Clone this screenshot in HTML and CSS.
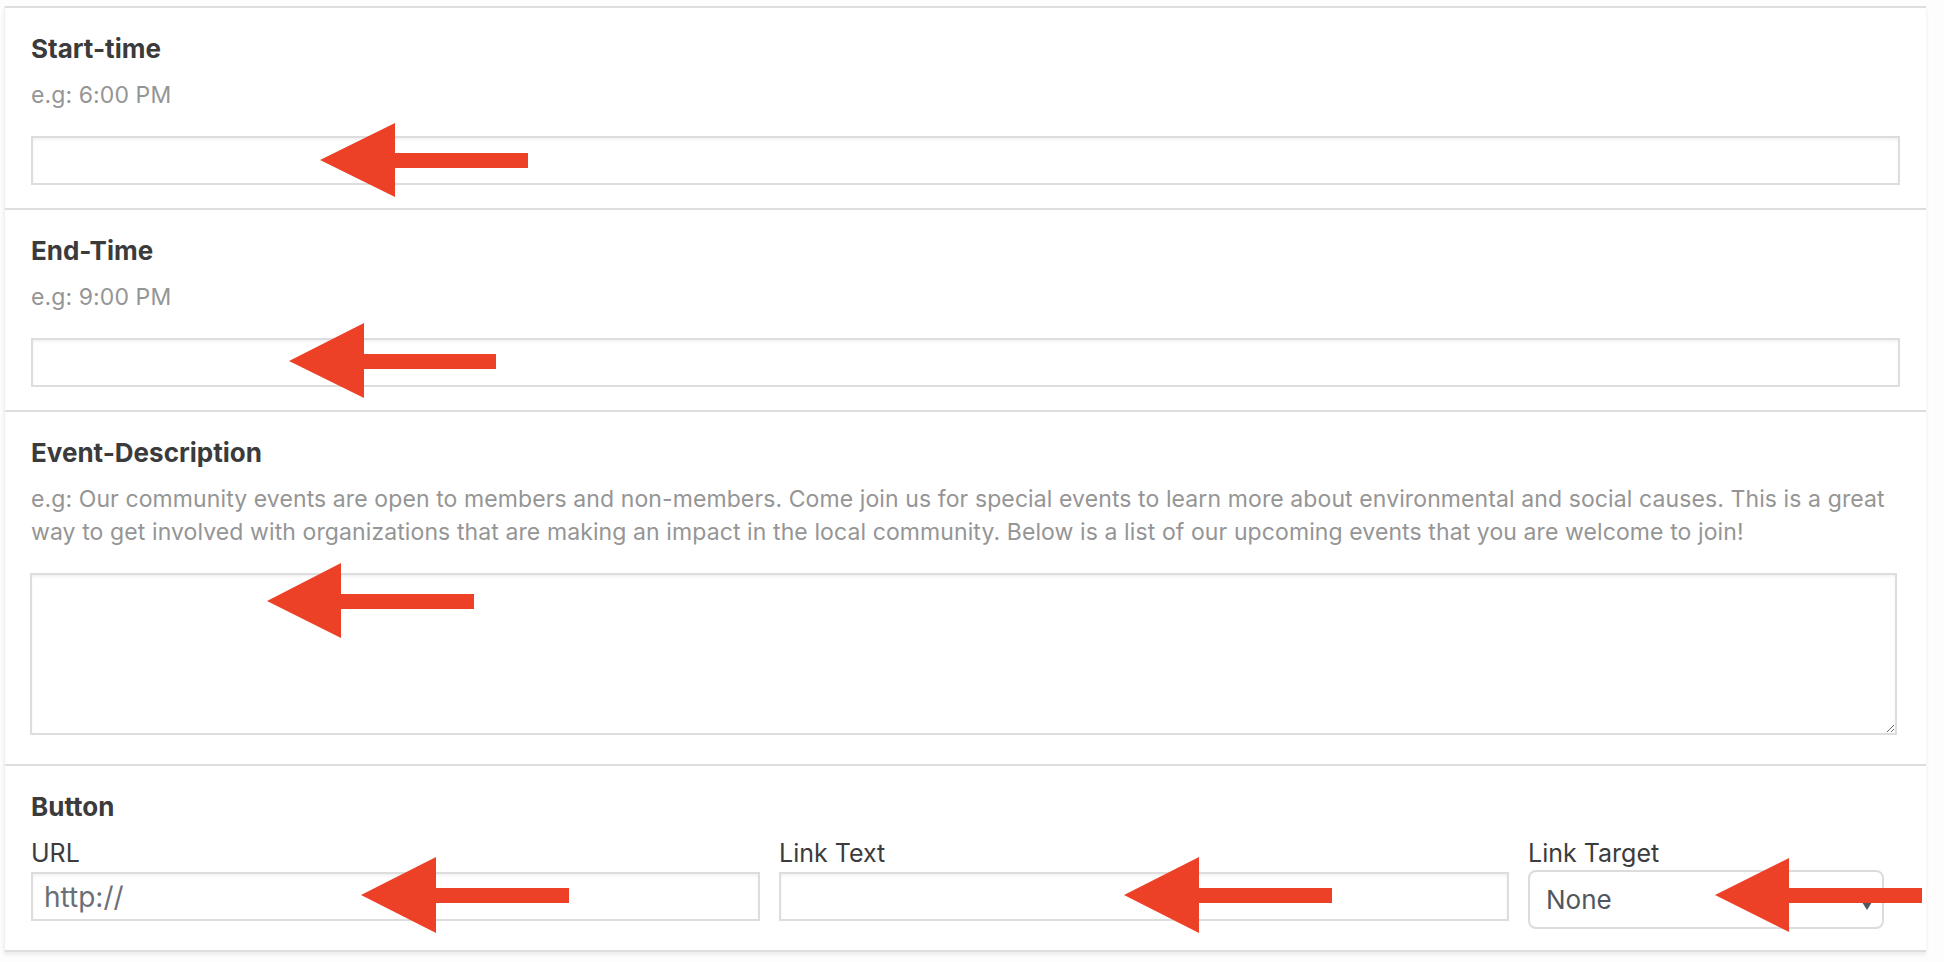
FILE: index.html
```html
<!DOCTYPE html>
<html lang="en">
<head>
<meta charset="utf-8">
<title>Event fields</title>
<link rel="stylesheet" href="styles.css">
</head>
<body>
<div class="panel">
  <section class="field">
    <div class="label">Start-time</div>
    <div class="hint">e.g: 6:00 PM</div>
    <input class="text-input" type="text">
  </section>
  <section class="field">
    <div class="label">End-Time</div>
    <div class="hint">e.g: 9:00 PM</div>
    <input class="text-input" type="text">
  </section>
  <section class="field">
    <div class="label">Event-Description</div>
    <div class="hint">e.g: Our community events are open to members and non-members. Come join us for special events to learn more about environmental and social causes. This is a great way to get involved with organizations that are making an impact in the local community. Below is a list of our upcoming events that you are welcome to join!</div>
    <textarea class="text-area"></textarea>
  </section>
  <section class="field field-last">
    <div class="label">Button</div>
    <div class="button-row">
      <div class="col">
        <label class="sub-label">URL</label>
        <input class="text-input small-input" type="text" value="http://">
      </div>
      <div class="col">
        <label class="sub-label">Link Text</label>
        <input class="text-input small-input" type="text">
      </div>
      <div class="col">
        <label class="sub-label">Link Target</label>
        <div class="select-wrap">
          <select class="select"><option>None</option></select>
        </div>
      </div>
    </div>
  </section>
</div>
<svg class="annotations" width="1944" height="962" viewBox="0 0 1944 962">
  <g fill="#ec4127">
    <polygon points="320,160 395,123 395,153 528,153 528,168 395,168 395,197"/>
    <polygon points="289,361 364,323 364,354 496,354 496,369 364,369 364,398"/>
    <polygon points="267,601 341,563 341,594 474,594 474,609 341,609 341,638"/>
    <polygon points="361,895 436,857 436,888 569,888 569,903 436,903 436,933"/>
    <polygon points="1124,895 1199,857 1199,888 1332,888 1332,903 1199,903 1199,933"/>
    <polygon points="1715,895 1789,858 1789,888 1922,888 1922,903 1789,903 1789,932"/>
  </g>
</svg>
</body>
</html>
```

FILE: styles.css
```css
html, body {
  margin: 0;
  padding: 0;
}

body {
  background: #fdfdfd;
  font-family: Inter, "Noto Sans", "Liberation Sans", sans-serif;
  position: relative;
  min-height: 962px;
}

.panel {
  margin: 6px 18px 0 4px;
  background: #ffffff;
  border-left: 1px solid #efefef;
  box-shadow: 0 3px 4px rgba(0, 0, 0, 0.07);
}

.field {
  border-top: 2px solid #dedede;
  padding: 24px 26px 23px 26px;
}

.field-last {
  border-bottom: 2px solid #dedede;
  padding-bottom: 21px;
}

.label {
  font-size: 26px;
  line-height: 34px;
  font-weight: 700;
  color: #3b3b3b;
}

.hint {
  margin-top: 13px;
  font-size: 23px;
  line-height: 33px;
  letter-spacing: 0.1px;
  color: #959595;
}

.text-input {
  display: block;
  box-sizing: border-box;
  width: 100%;
  height: 49px;
  margin: 24px 0 0 0;
  border: 2px solid #dddddd;
  border-radius: 0;
  box-shadow: inset 0 2px 3px rgba(0, 0, 0, 0.05);
  background: #ffffff;
  padding: 0 11px;
  font-family: Inter, "Noto Sans", "Liberation Sans", sans-serif;
  font-size: 28px;
  color: #6b6f75;
  outline: none;
}

.text-area {
  display: block;
  box-sizing: border-box;
  width: calc(100% - 2px);
  height: 162px;
  margin: 24px 0 6px -1px;
  border: 2px solid #dddddd;
  box-shadow: inset 0 2px 3px rgba(0, 0, 0, 0.05);
  background: #ffffff;
  font-family: Inter, "Noto Sans", "Liberation Sans", sans-serif;
  outline: none;
}

.button-row {
  display: grid;
  grid-template-columns: 729px 730px 356px;
  column-gap: 19px;
  margin-top: 14px;
  align-items: start;
}

.col {
  display: flex;
  flex-direction: column;
}

.sub-label {
  font-size: 25px;
  line-height: 30px;
  color: #3c3c3c;
  margin-bottom: 2px;
}

.small-input {
  margin-top: 2px;
}

.select-wrap {
  position: relative;
}

.select-wrap::after {
  content: "";
  position: absolute;
  right: 12px;
  top: 32px;
  width: 0;
  height: 0;
  border-left: 5px solid transparent;
  border-right: 5px solid transparent;
  border-top: 8px solid #50575e;
  pointer-events: none;
}

.select {
  -webkit-appearance: none;
  appearance: none;
  box-sizing: border-box;
  width: 100%;
  height: 59px;
  border: 2px solid #dcdcdc;
  border-radius: 8px;
  background: #ffffff;
  padding: 0 16px;
  font-family: Inter, "Noto Sans", "Liberation Sans", sans-serif;
  font-size: 26px;
  color: #50575e;
  outline: none;
}

.annotations {
  position: absolute;
  top: 0;
  left: 0;
  pointer-events: none;
}
```
